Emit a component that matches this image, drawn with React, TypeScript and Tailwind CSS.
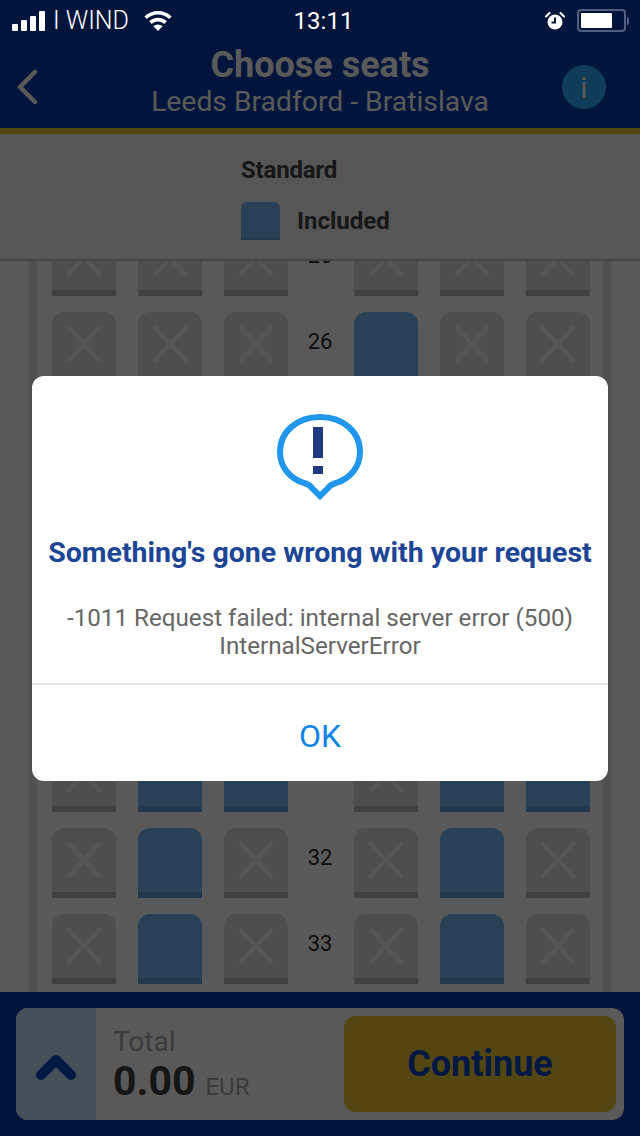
type SeatKind = "x" | "free";

const rows: { n: number; left: SeatKind[]; right: SeatKind[] }[] = [
  { n: 25, left: ["x", "x", "x"], right: ["x", "x", "x"] },
  { n: 26, left: ["x", "x", "x"], right: ["free", "x", "x"] },
  { n: 27, left: ["x", "x", "x"], right: ["x", "x", "x"] },
  { n: 28, left: ["x", "x", "x"], right: ["x", "x", "x"] },
  { n: 29, left: ["x", "x", "x"], right: ["x", "x", "x"] },
  { n: 30, left: ["x", "x", "x"], right: ["x", "x", "x"] },
  { n: 31, left: ["x", "free", "free"], right: ["x", "free", "free"] },
  { n: 32, left: ["x", "free", "x"], right: ["x", "free", "x"] },
  { n: 33, left: ["x", "free", "x"], right: ["x", "free", "x"] },
  { n: 34, left: ["x", "free", "x"], right: ["x", "free", "x"] },
];

function Seat({ kind }: { kind: SeatKind }) {
  if (kind === "free") {
    return <div className="h-[70px] w-16 shrink-0 rounded-t-xl border-b-[6px] border-[#62a3dd] bg-[#73b9f8]" />;
  }
  return (
    <div className="flex h-[70px] w-16 shrink-0 items-start justify-center rounded-t-xl border-b-[6px] border-[#b8b8b8] bg-[#dedede] pt-[14px]">
      <svg width="34" height="36" viewBox="0 0 34 36" fill="none">
        <path d="M2 2 L32 34 M32 2 L2 34" stroke="#fff" strokeOpacity="0.6" strokeWidth="4.500" strokeLinecap="round" />
      </svg>
    </div>
  );
}

function SignalBars() {
  return (
    <div className="flex items-end gap-[3px]">
      <div className="h-[7px] w-[6px] rounded-[1px] bg-white" />
      <div className="h-[11px] w-[6px] rounded-[1px] bg-white" />
      <div className="h-[15px] w-[6px] rounded-[1px] bg-white" />
      <div className="h-5 w-[6px] rounded-[1px] bg-white" />
    </div>
  );
}

function Wifi() {
  return (
    <svg width="28" height="20" viewBox="0 0 28 20" fill="white">
      <path d="M14 0C8.800 0 4 2 .4 5.400l2.500 2.600C5.800 5.200 9.700 3.600 14 3.600s8.200 1.600 11.100 4.400l2.500-2.600C24 2 19.200 0 14 0z" />
      <path d="M14 6.800c-3.400 0-6.500 1.300-8.800 3.500l2.500 2.600c1.700-1.500 3.900-2.500 6.300-2.500s4.600 1 6.300 2.500l2.500-2.600C20.500 8.100 17.400 6.800 14 6.800z" />
      <path d="M14 13.500c-1.800 0-3.400.7-4.600 1.800L14 20l4.600-4.700c-1.200-1.100-2.800-1.800-4.600-1.800z" />
    </svg>
  );
}

function Alarm() {
  return (
    <svg width="20" height="18" viewBox="0 0 20 18" fill="none">
      <circle cx="10" cy="10" r="7.500" fill="white" />
      <path d="M10 5.500V10.500H6.500" stroke="#011640" strokeWidth="2" />
      <path d="M1 4.500 L4.500 1 M19 4.500 L15.500 1" stroke="white" strokeWidth="2" strokeLinecap="round" />
    </svg>
  );
}

function Battery() {
  return (
    <div className="flex items-center">
      <div className="flex h-[23px] w-[49px] items-center rounded-[4px] border-2 border-[#4f6080] p-[2px]">
        <div className="h-full w-[31px] rounded-[1px] bg-white" />
      </div>
      <div className="ml-[1px] h-[8px] w-[2px] rounded-r-sm bg-[#4f6080]" />
    </div>
  );
}

function AlertIcon() {
  return (
    <svg width="86" height="88" viewBox="0 0 86 88" fill="none">
      <path
        d="M43 3C21 3 3 17 3 38C3 54 14 65 27 69C31 70 33 71 35 74L43 82L51 74C53 71 55 70 59 69C72 65 83 54 83 38C83 17 65 3 43 3Z"
        stroke="#2196ee"
        strokeWidth="6"
      />
      <rect x="36" y="13" width="10" height="31" fill="#1f3a7f" />
      <rect x="36" y="52" width="10" height="8" fill="#1f3a7f" />
    </svg>
  );
}

export default function App() {
  return (
    <div className="relative flex h-[1136px] w-[640px] flex-col overflow-hidden bg-white font-[Roboto,sans-serif]">
      {/* header */}
      <header className="h-[128px] shrink-0 bg-[#033aa8]">
        <div className="relative z-20 flex h-10 items-center justify-between pl-3 pr-[11px] pt-[1px] text-white">
          <div className="flex w-[180px] items-center">
            <SignalBars />
            <span className="ml-[8px] text-[25px] font-light leading-none">I WIND</span>
            <span className="ml-[15px]">
              <Wifi />
            </span>
          </div>
          <span className="ml-[6px] text-2xl leading-none">13:11</span>
          <div className="flex w-[180px] items-center justify-end gap-3">
            <Alarm />
            <Battery />
          </div>
        </div>
        <div className="grid h-[88px] grid-cols-[100px_1fr_100px] items-center pb-1">
          <svg className="ml-4 mt-[10px]" width="22" height="36" viewBox="0 0 22 36" fill="none">
            <path d="M19 3 L4 18 L19 33" stroke="white" strokeWidth="4.500" strokeLinecap="round" strokeLinejoin="round" />
          </svg>
          <div className="-mt-1 flex flex-col items-center text-white">
            <span className="text-[36px] font-bold leading-[44px]">Choose seats</span>
            <span className="text-[28.300px] leading-[30px]">Leeds Bradford - Bratislava</span>
          </div>
          <div className="ml-[22px] mt-[10px] flex h-11 w-11 items-center justify-center rounded-full bg-[#2dafff] text-[30px] text-white">
            i
          </div>
        </div>
      </header>
      <div className="h-[6px] shrink-0 bg-[#f1c933]" />

      {/* legend */}
      <section className="flex h-[127px] shrink-0 flex-col items-center border-b-2 border-[#c4c4c4] bg-[#f5f5f5] pt-[21px]">
        <div className="w-[158px] text-[#444]">
          <div className="text-2xl font-bold leading-[30px] tracking-[-0.2px]">Standard</div>
          <div className="mt-[17px] flex items-center">
            <div className="h-[38px] w-[39px] rounded-t-md border-b-[3px] border-[#62a3dd] bg-[#73b9f8]" />
            <span className="ml-[17px] text-2xl font-bold">Included</span>
          </div>
        </div>
      </section>

      {/* seat map */}
      <main className="min-h-0 flex-1 overflow-hidden">
        <div className="mx-[29px] -mt-[35px] flex flex-col gap-4 border-x-8 border-[#e6e6e6] pb-10 pl-[15px] pr-[13px]">
          {rows.map((row) => (
            <div key={row.n} className="flex">
              <div className="flex gap-[22px]">
                {row.left.map((kind, i) => (
                  <Seat key={i} kind={kind} />
                ))}
              </div>
              <div className="flex h-[58px] w-[66px] shrink-0 items-center justify-center pr-[2px] text-[22px] text-[#2a2a2a]">
                {row.n}
              </div>
              <div className="flex gap-[22px]">
                {row.right.map((kind, i) => (
                  <Seat key={i} kind={kind} />
                ))}
              </div>
            </div>
          ))}
        </div>
      </main>

      {/* footer */}
      <footer className="relative h-[144px] shrink-0 bg-[#033aa8] p-4">
        <div className="flex h-28 overflow-hidden rounded-xl bg-white">
          <div className="flex w-20 items-center justify-center bg-[#c6e1ff]">
            <svg className="mt-[6px]" width="40" height="26" viewBox="0 0 40 26" fill="none">
              <path d="M5 21 L20 6 L35 21" stroke="#0645c4" strokeWidth="10" strokeLinecap="round" strokeLinejoin="round" />
            </svg>
          </div>
          <div className="flex w-[248px] flex-col pl-[17px] pt-[17px]">
            <span className="text-[28px] leading-[34px] text-[#a8a8a8]">Total</span>
            <div className="flex items-baseline">
              <span className="text-[41px] font-bold leading-[44px] text-[#3c3c3c]">0.00</span>
              <span className="ml-[10px] text-2xl text-[#a8a8a8]">EUR</span>
            </div>
          </div>
          <div className="my-2 flex w-[272px] items-center justify-center rounded-xl bg-[#f1c933] text-[36px] font-bold text-[#0545c4]">
            Continue
          </div>
        </div>
      </footer>

      {/* dialog */}
      <div className="absolute inset-0 z-10 flex items-start justify-center bg-black/65 pt-[376px]">
        <div className="flex h-[405px] w-[576px] flex-col items-center rounded-xl bg-white">
          <div className="mt-[38px] h-[88px]">
            <AlertIcon />
          </div>
          <h2 className="mt-[29px] whitespace-nowrap text-[28.500px] font-bold leading-[44px] text-[#1c4596]">
            Something's gone wrong with your request
          </h2>
          <p className="mt-[29px] text-center text-[24.200px] leading-[28px] text-[#666]">
            -1011 Request failed: internal server error (500)
            <br />
            InternalServerError
          </p>
          <div className="mt-[23px] h-[2px] w-full bg-[#e6e6e6]" />
          <button className="flex h-[95px] w-full items-center justify-center pt-[6px] text-[32px] text-[#0a84e6]">OK</button>
        </div>
      </div>
    </div>
  );
}
